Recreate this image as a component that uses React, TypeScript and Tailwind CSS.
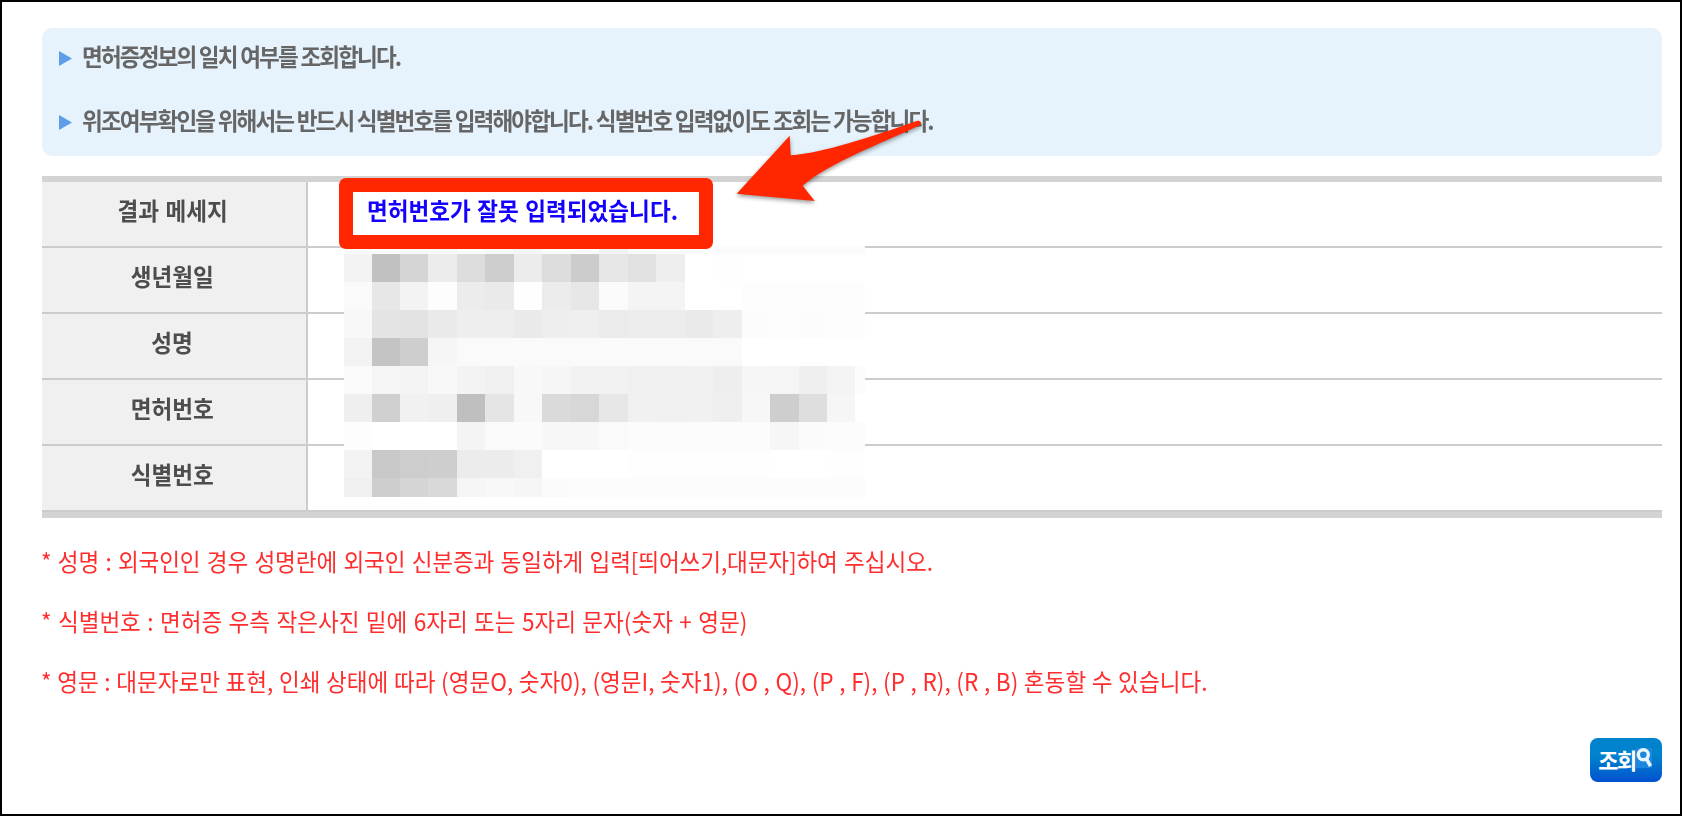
import type { FC } from "react";

interface TextLine {
  text: string;
  className: string;
}

interface ResultRow {
  label: string;
  message?: string;
}

const NOTICES: TextLine[] = [
  {
    text: "면허증정보의 일치 여부를 조회합니다.",
    className: "[word-spacing:0.4px]",
  },
  {
    text: "위조여부확인을 위해서는 반드시 식별번호를 입력해야합니다. 식별번호 입력없이도 조회는 가능합니다.",
    className: "[word-spacing:0.3px]",
  },
];

const ROWS: ResultRow[] = [
  { label: "결과 메세지", message: "면허번호가 잘못 입력되었습니다." },
  { label: "생년월일" },
  { label: "성명" },
  { label: "면허번호" },
  { label: "식별번호" },
];

const HINTS: TextLine[] = [
  {
    text: "* 성명 : 외국인인 경우 성명란에 외국인 신분증과 동일하게 입력[띄어쓰기,대문자]하여 주십시오.",
    className: "tracking-[-0.12px] [word-spacing:1.5px]",
  },
  {
    text: "* 식별번호 : 면허증 우측 작은사진 밑에 6자리 또는 5자리 문자(숫자 + 영문)",
    className: "tracking-[-0.03px] [word-spacing:1.5px]",
  },
  {
    text: "* 영문 : 대문자로만 표현, 인쇄 상태에 따라 (영문O, 숫자0), (영문I, 숫자1), (O , Q), (P , F), (P , R), (R , B) 혼동할 수 있습니다.",
    className: "[word-spacing:0.6px]",
  },
];

// Column and row edges of the pixelated area, relative to its own corner.
const MOSAIC_X = [
  0, 28, 56, 84, 113, 141, 170, 198, 227, 255, 284, 312, 341, 369, 398, 426,
  455, 483, 511, 521,
];
const MOSAIC_Y = [0, 8, 36, 64, 92, 120, 148, 176, 204, 232, 251];

// Grey level of every cell, two hex digits each.
const MOSAIC: string[] = [
  "fa fd f9 f9 fd f9 f5 fd fd f2 fb fb fb fb fb fb fb fb fb",
  "f3 c1 d5 ec dd ce ec dd cc e6 e1 ee ff fe ff ff ff ff ff",
  "fa e7 f3 fd ec ea fe ec e7 fb f4 f4 ff ff fd fd fd fd fd",
  "f8 e4 e3 ea ee ee ea ee ef eb ed ed ea ee fc fd fc fd fd",
  "f3 c4 ce f6 fa fa fa fa fa fa fa fa fa fa ff ff ff ff ff",
  "fa f5 f4 f8 f3 f0 f8 f6 f2 f2 f0 f0 f1 ee f6 f5 ef f4 fc",
  "ef d0 f1 ef bf e5 f8 da d7 e7 f1 f0 f1 ef f7 ce de f6 ff",
  "fd ff ff ff f4 fa fb f7 f7 fa fc fc fc fc fc f6 fb fc fc",
  "f3 c8 cd ce ec ec f0 ff ff ff fe fe fe fe fe ff ff fe fe",
  "f0 ce d5 d9 f5 f8 f6 fb fc fc fc fc fc fc fc fc fc fc fc",
];

const Mosaic: FC = () => (
  <svg
    className="absolute left-[302px] top-[70px]"
    width="521"
    height="251"
    shapeRendering="crispEdges"
    aria-hidden="true"
  >
    {MOSAIC.map((line, r) =>
      line.split(" ").map((level, c) => (
        <rect
          key={`${r}-${c}`}
          x={MOSAIC_X[c]}
          y={MOSAIC_Y[r]}
          width={MOSAIC_X[c + 1] - MOSAIC_X[c]}
          height={MOSAIC_Y[r + 1] - MOSAIC_Y[r]}
          fill={`#${level}${level}${level}`}
        />
      )),
    )}
  </svg>
);

const Arrow: FC = () => (
  <svg
    className="absolute left-[688px] top-[-66px] overflow-visible drop-shadow-[0_2px_2px_rgba(0,0,0,0.4)]"
    width="200"
    height="100"
    aria-hidden="true"
  >
    <path
      d="M6.7 83.7 L59.7 25.7 L60.7 45.3 C93 43 141 27 186.7 11 C190.5 9.8 192.8 13.4 189.3 15.5 C150 34 99 53 72.7 75.7 L84.7 91 Z"
      fill="#ff2600"
    />
  </svg>
);

const SearchIcon: FC = () => (
  <svg
    className="mb-[4px] h-5 w-4 bg-[#1b87df]"
    viewBox="0 0 16 20"
    fill="none"
    stroke="#e9f6ff"
    aria-hidden="true"
  >
    <circle cx="7.3" cy="6.8" r="5" strokeWidth="3.4" />
    <path d="M10.5 11 L14.5 18" strokeWidth="3.6" />
  </svg>
);

export default function App() {
  return (
    <div className="h-[816px] w-[1682px] overflow-hidden border-2 border-black bg-white pl-[40px] pr-[18px] pt-[26px] font-['Noto_Sans_CJK_KR',sans-serif] text-[24px] whitespace-nowrap">
      <ul className="h-32 rounded-[10px] bg-[#e6f3fc] pl-[17px] font-bold text-[#666]">
        {NOTICES.map((n) => (
          <li key={n.text} className="flex h-16 items-start">
            <svg className="mt-[23px] h-[15px] w-[13px]" viewBox="0 0 13 15" fill="#5c9fe8">
              <path d="M0 0 L13 7.5 L0 15 Z" />
            </svg>
            <span
              className={`ml-[10px] mt-[10px] inline-block origin-left scale-x-[0.94] leading-[36px] tracking-[-2px] ${n.className}`}
            >
              {n.text}
            </span>
          </li>
        ))}
      </ul>

      <div className="relative mt-5">
        <table className="w-full border-collapse border-y-[6px] border-[#d3d3d3]">
          <tbody className="block">
            {ROWS.map((row) => (
              <tr key={row.label} className="flex h-[66px] border-b-2 border-[#ccc]">
                <th className="w-[266px] border-r-2 border-[#ccc] bg-[#f0f0f0] pr-[3px] pt-[10px] font-bold leading-[36px] text-[#4d4d4d]">
                  <span className="inline-block scale-x-[0.94] [word-spacing:1.5px]">
                    {row.label}
                  </span>
                </th>
                <td className="flex-1 pl-[59px] pt-[10px] font-bold leading-[36px] text-[#1400ff]">
                  <span className="inline-block origin-left scale-x-[0.94] [word-spacing:1.5px]">
                    {row.message}
                  </span>
                </td>
              </tr>
            ))}
          </tbody>
        </table>
        <Mosaic />
        <div className="absolute left-[297px] top-[2px] h-[71px] w-[374px] rounded-[7px] border-[14px] border-[#ff2600]" />
        <Arrow />
      </div>

      <div className="-ml-px mt-[13px] leading-[60px] text-[#ff2d2d]">
        {HINTS.map((hint) => (
          <p key={hint.text} className="h-[60px]">
            <span className={`inline-block origin-left scale-x-[0.94] ${hint.className}`}>
              {hint.text}
            </span>
          </p>
        ))}
      </div>

      <div className="mt-[27px] flex justify-end">
        <button
          type="button"
          className="flex h-11 w-[72px] items-center rounded-lg bg-gradient-to-b from-[#0082cc] from-40% to-[#0050d0] pl-[8px] text-[22px] font-bold leading-none text-white"
        >
          <span className="mb-[2px] w-[38px] tracking-[-1.5px]">조회</span>
          <SearchIcon />
        </button>
      </div>
    </div>
  );
}
